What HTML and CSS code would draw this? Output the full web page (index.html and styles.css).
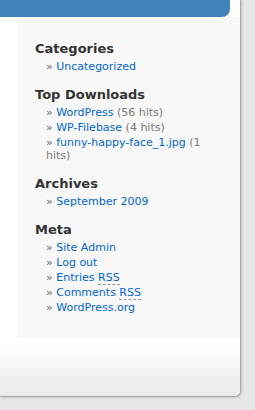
FILE: index.html
```html
<!DOCTYPE html>
<html>
<head>
<meta charset="utf-8">
<link rel="stylesheet" href="styles.css">
</head>
<body>
<div class="page">
  <div class="header"></div>
  <div class="sidebar">
    <div class="widget">
      <h2>Categories</h2>
      <ul>
        <li><a href="#">Uncategorized</a></li>
      </ul>
    </div>
    <div class="widget">
      <h2>Top Downloads</h2>
      <ul>
        <li><a href="#">WordPress</a> (56 hits)</li>
        <li><a href="#">WP-Filebase</a> (4 hits)</li>
        <li><a href="#">funny-happy-face_1.jpg</a> (1 hits)</li>
      </ul>
    </div>
    <div class="widget">
      <h2>Archives</h2>
      <ul>
        <li><a href="#">September 2009</a></li>
      </ul>
    </div>
    <div class="widget">
      <h2>Meta</h2>
      <ul>
        <li><a href="#">Site Admin</a></li>
        <li><a href="#">Log out</a></li>
        <li><a href="#">Entries <abbr>RSS</abbr></a></li>
        <li><a href="#">Comments <abbr>RSS</abbr></a></li>
        <li><a href="#">WordPress.org</a></li>
      </ul>
    </div>
  </div>
  <div class="footer"></div>
</div>
</body>
</html>
```
FILE: styles.css
```css
html, body {
  margin: 0;
  padding: 0;
  background: #e6e6e6;
}
body {
  font-family: "DejaVu Sans", Verdana, sans-serif;
  height: 410px;
  overflow: hidden;
}
.page {
  width: 240px;
  height: 396px;
  background: #fff;
  border-right: 1px solid #a8a8a8;
  border-bottom: 1px solid #a8a8a8;
  border-bottom-right-radius: 6px;
  box-shadow: 1px 1px 2px rgba(0,0,0,0.15);
  display: flex;
  flex-direction: column;
}
.header {
  width: 230px;
  height: 17px;
  background: #4282b9;
  border-bottom-right-radius: 8px;
  flex: none;
}
.sidebar {
  margin-left: 17px;
  background: #f8f8f8;
  height: 321px;
  padding: 24px 0 0 18px;
  box-sizing: border-box;
  flex: none;
}
.footer {
  flex: 1;
  background: linear-gradient(#ffffff 10%, #e9e9e9);
  border-bottom-right-radius: 6px;
}
.widget {
  margin-bottom: 14px;
}
h2 {
  margin: 0 0 4px;
  font-size: 13px;
  line-height: 15px;
  font-weight: bold;
  color: #333;
}
ul {
  margin: 0;
  padding: 0 0 0 11px;
  list-style: none;
}
li {
  font-size: 11px;
  line-height: 13px;
  margin-bottom: 2px;
  color: #777;
  width: 160px;
}
li::before {
  content: "» ";
  color: #666;
}
a {
  color: #0066cc;
  text-decoration: none;
}
abbr {
  text-decoration: none;
  border-bottom: 1px dashed #999;
}
```
